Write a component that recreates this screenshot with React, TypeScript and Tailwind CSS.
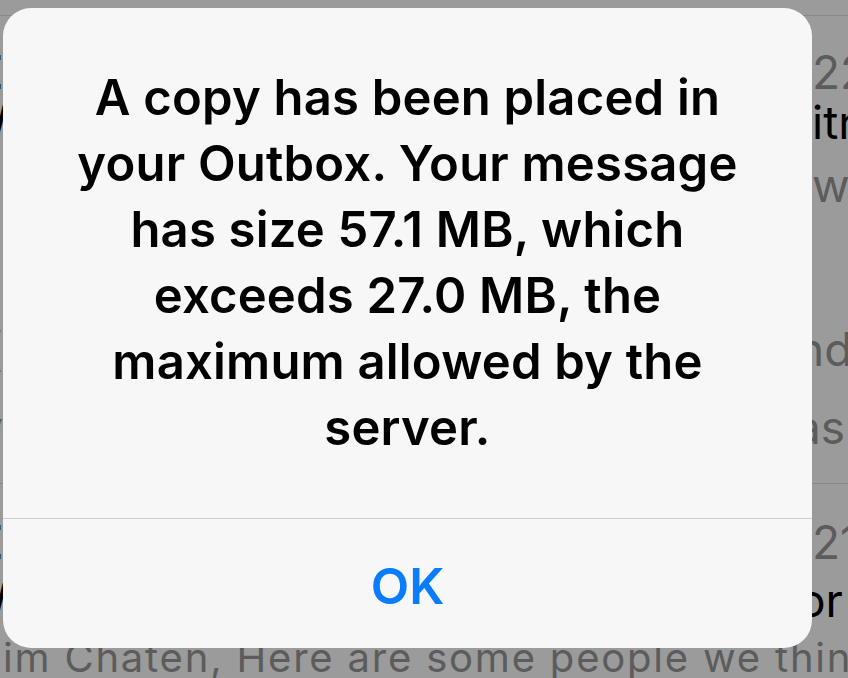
const alertLines = [
  'A copy has been placed in',
  'your Outbox. Your message',
  'has size 57.1 MB, which',
  'exceeds 27.0 MB, the',
  'maximum allowed by the',
  'server.',
]

function MailList() {
  return (
    <div className="flex flex-col whitespace-nowrap text-[46px] leading-[46px]">
      <div className="h-[16px] shrink-0 border-b border-[#888888]" />

      <div className="mt-[33px] flex h-[46px] shrink-0">
        <span className="-ml-[27px] w-[30px] shrink-0 text-right font-semibold text-black">E</span>
        <span className="ml-[809px] text-[#5c5c5c]">22 AM</span>
      </div>
      <div className="mt-[4px] flex h-[46px] shrink-0">
        <span className="-ml-[37px] w-[40px] shrink-0 text-right text-black">W</span>
        <span className="ml-[809px] text-black">itrix</span>
      </div>
      <div className="mt-[17px] flex h-[46px] shrink-0">
        <span className="w-[3px] shrink-0" />
        <span className="ml-[809px] text-[#5c5c5c]">week</span>
      </div>
      <div className="mt-[118px] flex h-[46px] shrink-0">
        <span className="-ml-[24px] w-[27px] shrink-0 text-right text-[#5c5c5c]">(</span>
        <span className="ml-[794px] text-[#5c5c5c]">nd</span>
      </div>
      <div className="mt-[32px] flex h-[46px] shrink-0">
        <span className="-ml-[37px] w-[40px] shrink-0 text-right text-[#5c5c5c]">v</span>
        <span className="ml-[792px] text-[#5c5c5c]">as</span>
      </div>
      <div className="mt-[33px] h-px shrink-0 bg-[#888888]" />

      <div className="mt-[35px] flex h-[46px] shrink-0">
        <span className="-ml-[27px] w-[30px] shrink-0 text-right font-semibold text-black">E</span>
        <span className="ml-[809px] text-[#5c5c5c]">21 AM</span>
      </div>
      <div className="mt-[12px] flex h-[46px] shrink-0">
        <span className="-ml-[37px] w-[40px] shrink-0 text-right text-black">W</span>
        <span className="ml-[795px] text-black">or</span>
      </div>
      <div className="mt-[15px] h-[40px] shrink-0 pl-[3px] text-[40px] leading-[40px] tracking-[1.8px] text-[#5c5c5c]">
        im Chaten, Here are some people we think
      </div>
    </div>
  )
}

function Alert() {
  return (
    <div className="absolute left-[3px] top-[8px] flex h-[640px] w-[809px] flex-col overflow-hidden rounded-[28px] bg-[#f7f7f7]">
      <div className="flex h-[510px] shrink-0 flex-col items-center pt-[57px] text-center text-[49px] font-semibold leading-[66px] tracking-[0.2px] text-black">
        {alertLines.map(line => (
          <span key={line}>{line}</span>
        ))}
      </div>
      <div className="flex flex-1 items-center justify-center border-t border-[#cdcdd2] pt-[6px] text-[50px] font-semibold text-[#0a7cff]">
        OK
      </div>
    </div>
  )
}

export default function App() {
  return (
    <div className="relative h-[678px] w-[848px] overflow-hidden bg-[#9b9b9b] font-['Inter',sans-serif]">
      <MailList />
      <Alert />
    </div>
  )
}
